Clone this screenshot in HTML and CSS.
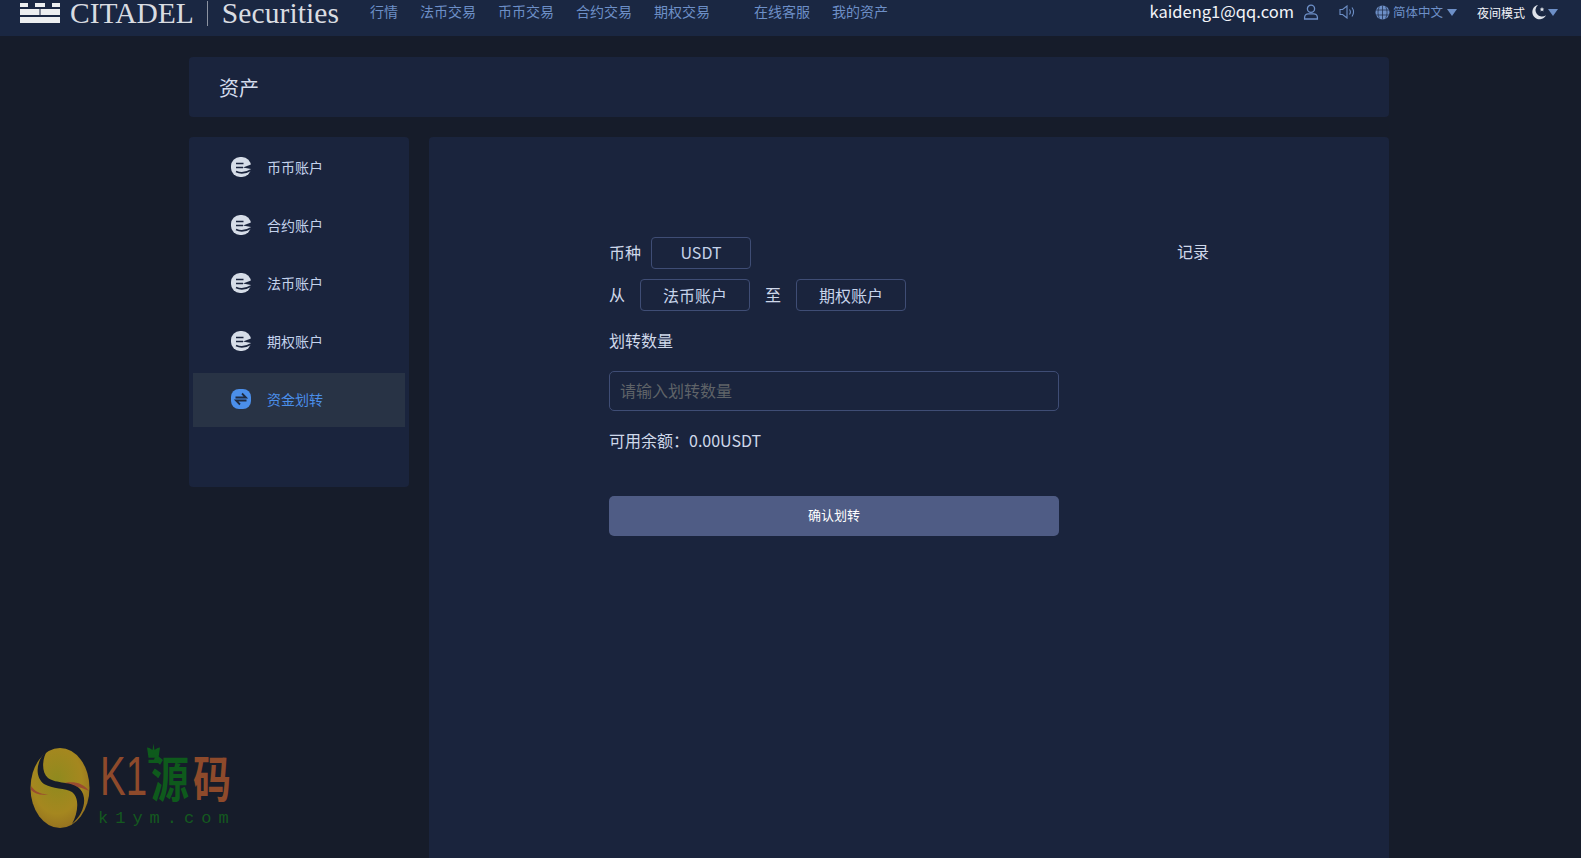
FILE: index.html
```html
<!DOCTYPE html>
<html lang="zh-CN">
<head>
<meta charset="utf-8">
<title>资产</title>
<link rel="stylesheet" href="styles.css">
</head>
<body>
<header class="topbar">
  <div class="logo">
    <svg class="logo-mark" width="40" height="20" viewBox="0 0 40 20"><path fill="#eceef0" d="M0 0h8v4H0zM15 0h10v4H15zM32 0h8v4h-8zM0 6h19.500v6H0zM20.500 6H40v6H20.500zM0 14h40v6H0z"/></svg>
    <span class="logo-name">CITADEL</span>
    <span class="logo-sep"></span>
    <span class="logo-sub">Securities</span>
  </div>
  <nav class="nav">
    <a class="nav-link">行情</a>
    <a class="nav-link">法币交易</a>
    <a class="nav-link">币币交易</a>
    <a class="nav-link">合约交易</a>
    <a class="nav-link nav-link-last">期权交易</a>
    <a class="nav-link">在线客服</a>
    <a class="nav-link">我的资产</a>
  </nav>
  <div class="top-right">
    <span class="email">kaideng1@qq.com</span>
    <svg class="i-user" width="16" height="16" viewBox="0 0 16 16" fill="none" stroke="#6d8fc7" stroke-width="1.3"><circle cx="8" cy="4.800" r="3.600"/><path d="M1.600 15v-1.600c0-2.200 1.800-3.600 3.600-3.600h5.600c1.800 0 3.600 1.400 3.600 3.600V15z"/></svg>
    <svg class="i-sound" width="16" height="14" viewBox="0 0 16 14" fill="none" stroke="#6d8fc7" stroke-width="1.100"><path d="M1 4.500h2.600L8 1v12L3.600 9.500H1z"/><path d="M10.500 4.500c1 1.400 1 3.600 0 5M13 2.500c1.800 2.600 1.800 6.400 0 9"/></svg>
    <span class="lang">
      <svg width="15" height="15" viewBox="0 0 15 15" fill="#6d8fc7"><circle cx="7.500" cy="7.500" r="7"/><path d="M.5 5h14M.5 10h14M7.500 .5v14M4.500 1.500c-2 3.500-2 8.500 0 12M10.500 1.500c2 3.500 2 8.500 0 12" stroke="#1a2742" stroke-width=".7" fill="none"/></svg>
      <span class="lang-text">简体中文</span>
      <span class="caret"></span>
    </span>
    <span class="mode">
      <span class="mode-text">夜间模式</span>
      <svg width="16" height="16" viewBox="0 0 16 16"><path fill="#dfe3ea" d="M7 1a7.200 7.200 0 1 0 8 10.200A6.400 6.400 0 0 1 7 1z"/><path fill="#dfe3ea" d="M11 3l.7 1.600 1.600.2-1.200 1 .4 1.600-1.500-.9-1.500.9.400-1.600-1.200-1 1.600-.2z"/></svg>
      <span class="caret"></span>
    </span>
  </div>
</header>

<div class="page">
  <div class="title-card">资产</div>
  <div class="columns">
    <aside class="side">
      <a class="side-item">
        <svg class="side-icon" viewBox="0 0 20 20"><use href="#coin"/></svg>
        <span>币币账户</span>
      </a>
      <a class="side-item">
        <svg class="side-icon" viewBox="0 0 20 20"><use href="#coin"/></svg>
        <span>合约账户</span>
      </a>
      <a class="side-item">
        <svg class="side-icon" viewBox="0 0 20 20"><use href="#coin"/></svg>
        <span>法币账户</span>
      </a>
      <a class="side-item">
        <svg class="side-icon" viewBox="0 0 20 20"><use href="#coin"/></svg>
        <span>期权账户</span>
      </a>
      <a class="side-item side-item-active">
        <svg class="side-icon" viewBox="0 0 20 20">
          <rect width="20" height="20" rx="8" fill="#4b8fea"/>
          <path d="M4.500 8.500h10.500L11 4.500M15.500 11.500H5l4 4" fill="none" stroke="#1f2b40" stroke-width="1.800"/>
        </svg>
        <span>资金划转</span>
      </a>
    </aside>
    <main class="panel">
      <div class="form">
        <div class="row row-first">
          <div class="row-group">
            <span class="label">币种</span>
            <span class="pick pick-coin">USDT</span>
          </div>
          <a class="records">记录</a>
        </div>
        <div class="row-group row-second">
          <span class="label">从</span>
          <span class="pick pick-from">法币账户</span>
          <span class="label label-to">至</span>
          <span class="pick pick-to">期权账户</span>
        </div>
        <div class="amount-label">划转数量</div>
        <input class="amount" type="text" placeholder="请输入划转数量">
        <div class="balance">可用余额：0.00USDT</div>
        <button class="submit" type="button">确认划转</button>
      </div>
    </main>
  </div>
</div>

<div class="watermark">
  <svg class="wm-logo" width="60" height="80" viewBox="0 0 60 80">
    <defs>
      <radialGradient id="gold" cx=".45" cy=".4" r=".7"><stop offset="0" stop-color="#8f8a1e"/><stop offset=".6" stop-color="#a5871f"/><stop offset="1" stop-color="#8f6a20"/></radialGradient>
    </defs>
    <ellipse cx="30" cy="40" rx="29.500" ry="40" fill="url(#gold)"/>
    <path d="M30 36C40 33 52 33 59 43 52 39 42 38 30 36zM1 38C5 44 12 47 20 46 12 48 5 46 1 42z" fill="#9a4c30"/>
    <path d="M18 1C6 12 4 28 14 36 22 41 36 40 42 44 50 50 48 65 42 76 54 66 58 50 50 41 42 33 26 36 18 30 11 24 12 10 18 1z" fill="#161c2a"/>
  </svg>
  <div class="wm-text">
    <div class="wm-title">
      <span class="wm-k">K1</span>
      <span class="wm-cjk wm-yuan">源<svg class="wm-crown" width="13" height="15" viewBox="0 0 13 15"><path fill="#0e5a1c" d="M6.500 0l1 5 3-1.500 2.500-.5-1.500 8H1.500L0 3l2.500.5 3 1.500zM1.500 12.500h10V15h-10z"/></svg></span>
      <span class="wm-cjk wm-ma">码</span>
    </div>
    <div class="wm-url">k1ym.com</div>
  </div>
</div>

<svg class="defs" width="0" height="0">
  <symbol id="coin" viewBox="0 0 20 20">
    <rect width="20" height="20" rx="9" fill="#d6dde8"/>
    <path d="M12 10.500L20 7.500V12z" fill="#1a243d"/>
    <path d="M5 6.500h7.500M5 10.500h7M5 14.500c4 2 10 1.500 15-1.500" fill="none" stroke="#1a243d" stroke-width="1.600"/>
  </symbol>
</svg>
</body>
</html>
```
FILE: styles.css
```css
* { box-sizing: border-box; }
html, body { margin: 0; height: 100%; }
body {
  background: #161c2a;
  color: #cfd8ea;
  font-family: "Noto Sans CJK SC", "Noto Sans", sans-serif;
  overflow: hidden;
}
.defs { position: absolute; }

.topbar {
  height: 36px;
  background: #1a2742;
  display: flex;
  align-items: center;
  padding-left: 20px;
  overflow: hidden;
}
.logo {
  display: flex;
  align-items: center;
  width: 350px;
  flex: none;
  color: #d9dce1;
  font-family: "Liberation Serif", serif;
  font-size: 29.500px;
  line-height: 26px;
  margin-top: -10px;
}
.logo-mark { flex: none; margin-top: 0; }
.logo-name { margin-left: 10px; letter-spacing: 0; }
.logo-sep { width: 1px; height: 25px; background: #8c93a1; margin: 0 14px 0 13px; }
.logo-sub { letter-spacing: .1px; }
.nav { display: flex; gap: 22px; margin-top: -14px; }
.nav-link { font-size: 14px; line-height: 20px; color: #6d8fc7; white-space: nowrap; }
.nav-link-last { margin-right: 22px; }
.top-right {
  margin-left: auto;
  display: flex;
  align-items: center;
  margin-top: -12px;
  padding-right: 23px;
}
.email { font-size: 16.500px; line-height: 22px; color: #f2f4f8; padding-bottom: 2px; }
.i-user { margin-left: 9px; }
.i-sound { margin-left: 20px; }
.lang { display: flex; align-items: center; margin-left: 20px; }
.lang-text { margin-left: 3px; font-size: 12.500px; color: #6d8fc7; padding-bottom: 2px; }
.caret {
  width: 0; height: 0;
  border-left: 5.500px solid transparent;
  border-right: 5.500px solid transparent;
  border-top: 7px solid #6d8fc7;
  margin-left: 4px;
}
.mode { display: flex; align-items: center; margin-left: 20px; }
.mode-text { font-size: 12px; color: #f2f4f8; margin-right: 6px; }
.mode .caret { margin-left: 1px; }

.page { width: 1200px; margin-left: 189px; padding-top: 21px; }
.title-card {
  height: 60px;
  background: #1a243d;
  border-radius: 4px;
  padding-left: 30px;
  font-size: 20px;
  line-height: 62px;
  color: #d4dcec;
}
.columns { display: flex; gap: 20px; margin-top: 20px; align-items: flex-start; }
.side {
  width: 220px;
  height: 350px;
  flex: none;
  background: #1a243d;
  border-radius: 4px;
  padding: 4px 4px 0;
  display: flex;
  flex-direction: column;
  gap: 4px;
}
.side-item {
  height: 54px;
  display: flex;
  align-items: center;
  padding: 0 0 2px 38px;
  gap: 16px;
  font-size: 14px;
  color: #c3d2ec;
}
.side-icon { width: 20px; height: 20px; flex: none; }
.side-item-active { background: #283345; color: #4b8fea; }

.panel {
  width: 960px;
  height: 730px;
  background: #1a243d;
  border-radius: 4px 4px 0 0;
  padding: 100px 0 0 180px;
}
.form { width: 600px; }
.row { display: flex; justify-content: space-between; align-items: center; }
.row-group { display: flex; align-items: center; }
.label { font-size: 16px; color: #cfd8ea; padding-bottom: 2px; }
.pick {
  display: flex;
  align-items: center;
  justify-content: center;
  height: 32px;
  border: 1px solid #3f4d75;
  border-radius: 4px;
  font-size: 16px;
  color: #c6d3ea;
}
.pick-coin { width: 100px; margin-left: 10px; padding-bottom: 2px; }
.row-second { margin-top: 10px; }
.pick-from { width: 110px; margin-left: 15px; }
.label-to { margin-left: 15px; }
.pick-to { width: 110px; margin-left: 15px; }
.records { font-size: 16px; color: #cfd8ea; padding-bottom: 4px; }
.amount-label { margin-top: 17px; font-size: 16px; line-height: 24px; color: #cfd8ea; }
.amount {
  display: block;
  width: 450px;
  height: 40px;
  margin-top: 19px;
  padding: 0 10px 3px;
  background: transparent;
  border: 1px solid #3f4d75;
  border-radius: 5px;
  font: 16px "Noto Sans CJK SC", "Noto Sans", sans-serif;
  color: #cfd8ea;
  outline: none;
}
.amount::placeholder { color: #5f6368; opacity: 1; }
.balance { margin-top: 17px; font-size: 16px; line-height: 24px; color: #cfd8ea; }
.submit {
  display: block;
  width: 450px;
  height: 40px;
  margin-top: 44px;
  padding: 0 0 3px;
  background: #4f5c85;
  border: 0;
  border-radius: 5px;
  color: #fff;
  font: 400 13px "Noto Sans CJK SC", "Noto Sans", sans-serif;
}

.watermark {
  position: absolute;
  left: 30px;
  top: 748px;
  display: flex;
}
.wm-logo { flex: none; }
.wm-text { margin-left: 8px; }
.wm-title {
  display: flex;
  align-items: center;
  height: 56px;
  padding-left: 2px;
  white-space: nowrap;
}
.wm-k {
  flex: none;
  width: 65px;
  margin-right: -14px;
  color: #8e4a2b;
  font-family: "Liberation Sans", sans-serif;
  font-size: 55px;
  line-height: 50px;
  transform: scaleX(.7);
  transform-origin: left center;
}
.wm-cjk {
  position: relative;
  flex: none;
  width: 38px;
  font-size: 38px;
  line-height: 50px;
  font-weight: 700;
  transform: scaleY(1.3);
}
.wm-yuan { color: #0e5a1c; margin-right: 4px; }
.wm-ma { color: #8e4a2b; }
.wm-crown { position: absolute; left: -4px; top: 0; }
.wm-url {
  margin-top: 5px;
  font-family: "Liberation Mono", monospace;
  font-size: 17px;
  line-height: 20px;
  letter-spacing: 7px;
  color: #14591f;
}
```
